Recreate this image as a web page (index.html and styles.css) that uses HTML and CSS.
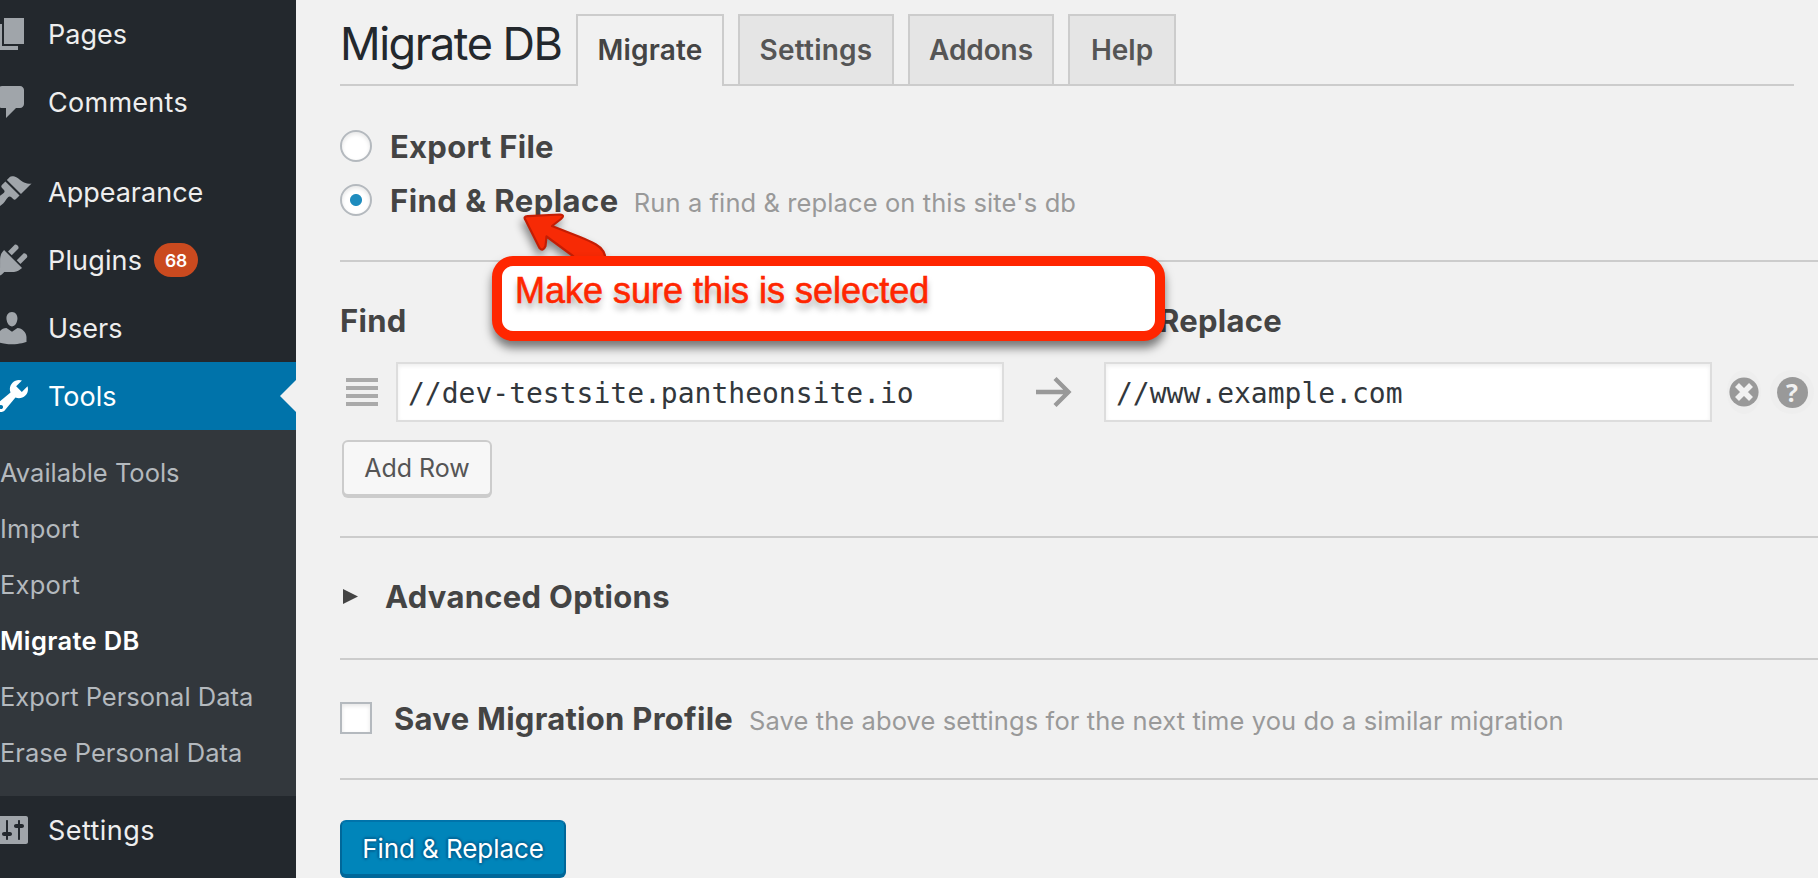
FILE: index.html
```html
<!DOCTYPE html>
<html lang="en">
<head>
<meta charset="utf-8">
<title>Migrate DB</title>
<link rel="stylesheet" href="styles.css">
</head>
<body>
<div class="app">
  <nav class="sidebar">
    <a class="item"><svg class="icon" viewBox="0 0 20 20"><path d="M6 15V2h10v13H6zm-1 1h8v2H3V5h2v11z"/></svg><span class="label t-pages">Pages</span></a>
    <a class="item"><svg class="icon" viewBox="0 0 20 20"><path d="M5 2h9c1.100 0 2 .9 2 2v7c0 1.100-.9 2-2 2h-2l-5 5v-5H5c-1.100 0-2-.9-2-2V4c0-1.100.9-2 2-2z"/></svg><span class="label t-comments">Comments</span></a>
    <div class="gap"></div>
    <a class="item"><svg class="icon" viewBox="0 0 20 20"><path d="M14.480 11.060L7.410 3.990l1.500-1.500c.5-.56 2.300-.47 3.510.32 1.210.8 1.430 1.280 2.910 2.100 1.180.64 2.450 1.260 4.450.85zm-.71.71L6.700 4.700 4.930 6.470c-.39.39-.39 1.020 0 1.410l1.060 1.060c.39.39.39 1.030 0 1.420-.6.6-1.430 1.110-2.210 1.690-.35.26-.7.53-1.010.84C1.430 14.230.4 16.080 1.400 17.070c.99 1 2.840-.03 4.180-1.360.31-.31.58-.66.85-1.020.57-.78 1.080-1.610 1.690-2.210.39-.39 1.020-.39 1.410 0l1.060 1.060c.39.39 1.020.39 1.410 0z"/></svg><span class="label t-appearance">Appearance</span></a>
    <a class="item"><svg class="icon" viewBox="0 0 20 20"><path d="M13.110 4.360L9.870 7.600 8 5.730l3.240-3.240c.35-.34 1.050-.2 1.560.32.52.51.66 1.210.31 1.550zm-8 1.770l.91-1.120 9.010 9.010-1.190.84c-.71.71-2.630 1.160-3.820 1.160H6.140L4.900 17.260c-.59.59-1.540.59-2.120 0-.59-.58-.59-1.530 0-2.120l1.240-1.240v-3.880c0-1.130.4-3.190 1.090-3.890zm7.260 3.970l3.240-3.240c.34-.35 1.040-.21 1.550.31.52.51.66 1.210.31 1.550l-3.240 3.250z"/></svg><span class="label t-plugins">Plugins</span><span class="count">68</span></a>
    <a class="item"><svg class="icon" viewBox="0 0 20 20"><path d="M10 9.250c-2.270 0-2.730-3.440-2.730-3.440C7 4.020 7.820 2 9.970 2c2.160 0 2.980 2.020 2.710 3.810 0 0-.41 3.440-2.680 3.440zm0 2.570L12.720 10c2.390 0 4.520 2.330 4.520 4.530v2.490s-3.650 1.130-7.240 1.130c-3.650 0-7.240-1.130-7.240-1.130v-2.490c0-2.250 1.940-4.480 4.470-4.480z"/></svg><span class="label t-users">Users</span></a>
    <a class="item current"><svg class="icon" viewBox="0 0 20 20"><path d="M16.680 9.770c-1.340 1.340-3.300 1.670-4.950.99l-5.410 6.520c-.99.99-2.590.99-3.580 0s-.99-2.590 0-3.570l6.520-5.420c-.68-1.650-.35-3.610.99-4.950 1.280-1.280 3.120-1.620 4.720-1.060l-2.890 2.890 2.820 2.820 2.860-2.870c.53 1.580.18 3.390-1.080 4.650zM3.810 16.210c.4.39 1.040.39 1.430 0 .4-.4.4-1.040 0-1.430-.39-.4-1.030-.4-1.430 0-.39.39-.39 1.030 0 1.430z"/></svg><span class="label t-tools">Tools</span></a>
    <div class="submenu">
      <a class="sub s-avail">Available Tools</a>
      <a class="sub s-import">Import</a>
      <a class="sub s-export">Export</a>
      <a class="sub active">Migrate DB</a>
      <a class="sub s-exppd">Export Personal Data</a>
      <a class="sub s-erase">Erase Personal Data</a>
    </div>
    <a class="item"><svg class="icon" viewBox="0 0 20 20"><path d="M18 16V4c0-.55-.45-1-1-1H3c-.55 0-1 .45-1 1v12c0 .55.45 1 1 1h14c.55 0 1-.45 1-1zM8 11h1c.55 0 1 .45 1 1s-.45 1-1 1H8v1.500c0 .28-.22.5-.5.5s-.5-.22-.5-.5V13H6c-.55 0-1-.45-1-1s.45-1 1-1h1V5.500c0-.28.22-.5.5-.5s.5.22.5.5V11zm5-2h-1c-.55 0-1-.45-1-1s.45-1 1-1h1V5.500c0-.28.22-.5.5-.5s.5.22.5.5V7h1c.55 0 1 .45 1 1s-.45 1-1 1h-1v5.500c0 .28-.22.5-.5.5s-.5-.22-.5-.5V9z"/></svg><span class="label t-settings">Settings</span></a>
  </nav>

  <main class="main">
    <header class="tabs">
      <h1 class="title">Migrate DB</h1>
      <a class="tab tab-migrate on">Migrate</a>
      <a class="tab tab-settings">Settings</a>
      <a class="tab tab-addons">Addons</a>
      <a class="tab tab-help">Help</a>
    </header>

    <section class="modes">
      <label class="mode"><span class="radio"></span><b class="strong b-export">Export File</b></label>
      <label class="mode"><span class="radio checked"></span><b class="strong b-find">Find &amp; Replace</b><span class="note n-run">Run a find &amp; replace on this site's db</span></label>
    </section>

    <section class="pairs">
      <div class="heads"><b class="strong h-find">Find</b><b class="strong h-replace">Replace</b></div>
      <div class="pair">
        <svg class="grip" viewBox="0 0 32 28"><path d="M0 0h32v4H0zM0 8h32v4H0zM0 16h32v4H0zM0 24h32v4H0z"/></svg>
        <div class="field">//dev-testsite.pantheonsite.io</div>
        <svg class="arrow" viewBox="0 0 36 30"><path d="M0 15h32M19 1.500L32.500 15 19 28.500"/></svg>
        <div class="field">//www.example.com</div>
        <svg class="remove" viewBox="0 0 34 44"><ellipse cx="17" cy="22" rx="17" ry="22" fill="#eee"/><circle cx="17" cy="22" r="14.600" fill="#999"/><path d="M10 15l14 14M24 15L10 29" stroke="#f1f1f1" stroke-width="5.600"/></svg>
        <span class="help"><span class="help-dot">?</span></span>
      </div>
      <button class="btn add">Add Row</button>
    </section>

    <section class="advanced"><svg class="caret" viewBox="0 0 15 15"><path d="M0 0l15 7.500L0 15z"/></svg><b class="strong b-adv">Advanced Options</b></section>

    <section class="profile"><span class="check"></span><b class="strong b-save">Save Migration Profile</b><span class="note n-save">Save the above settings for the next time you do a similar migration</span></section>

    <section class="submit"><button class="btn primary">Find &amp; Replace</button></section>
  </main>

  <div class="callout">
    <svg class="pointer" viewBox="0 0 100 60">
      <path d="M7.500 10Q5 6.500 9.500 6.200L42 4.500Q47.500 5 43 9L34 16 62 27Q72 31 78 34.500Q87.500 40 87.500 50V56H66L55 46 28.500 26.500 27.500 36Q25 42 21.500 38Z"/>
    </svg>
    <div class="bubble">Make sure this is selected</div>
  </div>
</div>
</body>
</html>
```

FILE: styles.css
```css
* { box-sizing: border-box; }
body {
  margin: 0;
  background: #f1f1f1;
  font-family: Inter, "Liberation Sans", sans-serif;
  color: #444;
  overflow: hidden;
}
.app { position: relative; display: flex; width: 1818px; height: 878px; overflow: hidden; }

/* Sidebar */
.sidebar { flex: none; width: 296px; background: #23282d; overflow: hidden; }
.item { display: flex; align-items: center; height: 68px; font-size: 27px; line-height: 66px; color: #eee; }
.label { padding-top: 2px; }
.t-comments { letter-spacing: .28px; }
.t-plugins { letter-spacing: .15px; }
.t-settings { letter-spacing: .43px; }
.gap { height: 22px; }
.icon { flex: none; width: 40px; height: 40px; margin-left: -8px; margin-right: 16px; fill: #a0a5aa; }
.count {
  width: 44px; height: 34px; margin-left: 12px; border-radius: 17px;
  background: #ca4a1f; color: #fff;
  font-size: 17.500px; font-weight: 600; line-height: 35px; text-align: center;
}
.current { position: relative; background: #0073aa; color: #fff; }
.current .icon { fill: #fff; }
.current::after {
  content: ""; position: absolute; right: 0; top: 18px;
  border: 16px solid transparent; border-left: 0; border-right-color: #f1f1f1;
}
.submenu { height: 366px; padding-top: 15px; background: #32373c; }
.sub { display: block; height: 56px; font-size: 25.500px; line-height: 56px; color: #b4b9be; white-space: nowrap; }
.sub.active { color: #fff; font-weight: 600; letter-spacing: .35px; }
.s-import, .s-export { letter-spacing: .25px; }

/* Main column */
.main { flex: none; width: 1522px; padding-left: 44px; display: flex; flex-direction: column; }
.tabs { display: flex; align-items: flex-end; width: 1454px; height: 86px; border-bottom: 2px solid #ccc; }
.title { margin: 0; width: 236px; height: 84px; font-size: 45px; line-height: 88px; font-weight: 400; color: #23282d; letter-spacing: -1.500px; white-space: nowrap; }
.tab {
  height: 70px; margin-right: 14px; border: 2px solid #ccc; border-bottom: 0; background: #e5e5e5;
  font-size: 28px; font-weight: 600; line-height: 68px; color: #555; text-align: center; white-space: nowrap;
}
.tab.on { height: 72px; margin-bottom: -2px; background: #f1f1f1; color: #444; }
.tab-migrate { width: 148px; letter-spacing: .15px; }
.tab-settings { width: 156px; letter-spacing: .25px; }
.tab-addons { width: 146px; letter-spacing: -.1px; }
.tab-help { width: 108px; }

.strong { font-size: 31px; font-weight: 700; color: #444; letter-spacing: .28px; white-space: nowrap; }
.b-find { letter-spacing: .48px; }
.note { font-size: 25.500px; color: #999; letter-spacing: .1px; white-space: nowrap; }

.modes { height: 176px; padding-top: 33px; border-bottom: 2px solid #ccc; }
.mode { display: flex; align-items: baseline; height: 54px; line-height: 56px; }
.radio { align-self: center; width: 32px; height: 32px; margin-right: 18px; border: 2px solid #b4b9be; border-radius: 50%; background: #fff; box-shadow: inset 0 2px 4px rgba(0,0,0,.1); }
.radio.checked { background: radial-gradient(circle, #1e8cbe 0 5.500px, #fff 6.500px); }
.mode .note { margin-left: 15px; }

.pairs { height: 276px; border-bottom: 2px solid #ccc; }
.heads { display: flex; height: 100px; padding-top: 34px; line-height: 50px; }
.h-find { width: 819px; }
.pair { display: flex; align-items: center; height: 60px; padding-left: 6px; }
.grip { flex: none; width: 32px; height: 28px; margin-right: 18px; fill: #aaa; }
.field {
  flex: none; width: 608px; height: 60px; padding-left: 10px; border: 2px solid #ddd; background: #fff;
  box-shadow: inset 0 2px 4px rgba(0,0,0,.07);
  font-family: "DejaVu Sans Mono", monospace; font-size: 28px; line-height: 60px; color: #32373c; white-space: nowrap;
}
.arrow { flex: none; width: 36px; height: 30px; margin: 0 32px; fill: none; stroke: #999; stroke-width: 4.300; }
.remove { flex: none; width: 34px; height: 44px; margin-left: 15px; }
.help { flex: none; display: flex; align-items: center; justify-content: center; width: 44px; height: 44px; margin-left: 9px; border-radius: 50%; background: #eee; }
.help-dot { width: 31px; height: 31px; border-radius: 50%; background: #999; color: #f1f1f1; font: 700 25px/31px "Open Sans", sans-serif; text-align: center; }

.btn { display: block; border-radius: 6px; font-family: inherit; font-size: 25px; white-space: nowrap; padding: 0; }
.add { width: 150px; height: 56px; margin: 18px 0 0 2px; border: 2px solid #ccc; background: #f7f7f7; box-shadow: 0 2px 0 #ccc; color: #555; }
.primary {
  width: 226px; height: 56px; border: 2px solid; border-color: #0073aa #006799 #006799; background: #0085ba;
  font-size: 26px; letter-spacing: -.08px;
  box-shadow: 0 2px 0 #006799; color: #fff; text-shadow: 0 -2px 2px #006799, 2px 0 2px #006799, 0 2px 2px #006799, -2px 0 2px #006799;
}

.advanced { display: flex; align-items: center; height: 122px; padding-bottom: 3px; border-bottom: 2px solid #ccc; line-height: 50px; }
.caret { width: 15px; height: 15px; margin: 0 27px 0 3px; fill: #444; }
.profile { display: flex; align-items: baseline; height: 120px; padding-top: 33px; border-bottom: 2px solid #ccc; line-height: 52px; }
.check { align-self: flex-start; width: 32px; height: 32px; margin: 9px 22px 0 0; border: 2px solid #b4b9be; background: #fff; box-shadow: inset 0 2px 4px rgba(0,0,0,.1); }
.profile .note { margin-left: 16px; }
.submit { padding-top: 40px; }

/* Annotation over the page */
.callout { position: absolute; left: 492px; top: 256px; width: 673px; height: 85px; }
.pointer {
  position: absolute; left: 26px; top: -46px; width: 100px; height: 60px; overflow: visible;
  fill: #f72a05; stroke: #c41d04; stroke-width: 2.200; stroke-linejoin: round;
  filter: drop-shadow(-2px 5px 4px rgba(0,0,0,.45));
}
.bubble {
  position: relative; height: 85px; padding-left: 13px; border: 10px solid #ff2600; border-radius: 21px; background: #fff;
  box-shadow: 0 7px 10px rgba(0,0,0,.5);
  font-family: "Liberation Sans", Arial, sans-serif; font-size: 36px; line-height: 50px; color: #ff2600; white-space: nowrap;
  -webkit-text-stroke: .6px #ff2600;
  text-shadow: 0 6px 6px rgba(0,0,0,.35);
}
```
